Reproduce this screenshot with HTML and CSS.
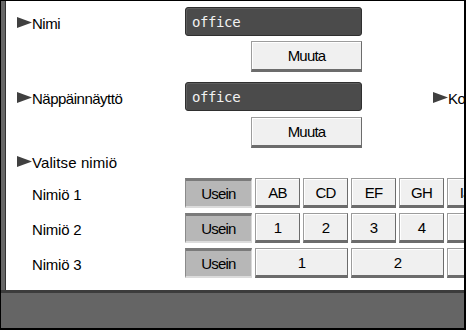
FILE: index.html
```html
<!DOCTYPE html>
<html>
<head>
<meta charset="utf-8">
<link rel="stylesheet" href="styles.css">
</head>
<body>
<div class="screen">
  <div class="main">
    <div class="panel">
      <div class="field first">
        <div class="label"><svg class="tri" width="15" height="11" viewBox="0 0 15 11"><path d="M0 0L15 5.5L0 11Z"/></svg>Nimi</div>
        <div class="tbox">office</div>
      </div>
      <div class="actions first-act"><button class="btn muuta">Muuta</button></div>
      <div class="field second">
        <div class="label"><svg class="tri" width="15" height="11" viewBox="0 0 15 11"><path d="M0 0L15 5.5L0 11Z"/></svg>Näppäinnäyttö</div>
        <div class="tbox">office</div>
        <div class="label ko"><svg class="tri" width="15" height="11" viewBox="0 0 15 11"><path d="M0 0L15 5.5L0 11Z"/></svg>Koko</div>
      </div>
      <div class="actions second-act"><button class="btn muuta">Muuta</button></div>
      <div class="label section"><svg class="tri" width="15" height="11" viewBox="0 0 15 11"><path d="M0 0L15 5.5L0 11Z"/></svg>Valitse nimiö</div>
      <div class="rows">
        <div class="row">
          <span class="rlabel">Nimiö 1</span>
          <button class="btn sel">Usein</button>
          <button class="btn key">AB</button>
          <button class="btn key">CD</button>
          <button class="btn key">EF</button>
          <button class="btn key">GH</button>
          <button class="btn key">IJK</button>
        </div>
        <div class="row">
          <span class="rlabel">Nimiö 2</span>
          <button class="btn sel">Usein</button>
          <button class="btn key">1</button>
          <button class="btn key">2</button>
          <button class="btn key">3</button>
          <button class="btn key">4</button>
          <button class="btn key">5</button>
        </div>
        <div class="row">
          <span class="rlabel">Nimiö 3</span>
          <button class="btn sel">Usein</button>
          <button class="btn wide">1</button>
          <button class="btn wide">2</button>
          <button class="btn wide">3</button>
        </div>
      </div>
    </div>
  </div>
  <div class="footer"></div>
</div>
</body>
</html>
```

FILE: styles.css
```css
html, body {
  margin: 0;
  padding: 0;
  background: #000;
}
.screen {
  width: 466px;
  height: 330px;
  box-sizing: border-box;
  background: #000;
  padding: 1px 2px 2px 1px;
  display: flex;
  flex-direction: column;
  overflow: hidden;
  font-family: "Liberation Sans", Arial, sans-serif;
}
.main {
  height: 289px;
  display: flex;
  background: #666;
  padding-left: 4px;
}
.panel {
  flex: 1;
  background: #fff;
  border-left: 1px solid #333;
  overflow: hidden;
  padding-left: 11px;
  min-width: 0;
}
.field {
  display: flex;
  align-items: center;
  height: 29px;
}
.field.first { margin-top: 6px; }
.field.second { margin-top: 10px; }
.label {
  display: flex;
  align-items: center;
  width: 168px;
  flex: none;
  font-size: 15px;
  letter-spacing: -0.5px;
  color: #000;
  padding-top: 3px;
  white-space: nowrap;
}
.tri {
  fill: #404040;
  flex: none;
  margin-top: -1px;
}
.tbox {
  box-sizing: border-box;
  width: 177px;
  height: 29px;
  flex: none;
  background: #4b4b4b;
  border: 1px solid #2f2f2f;
  border-radius: 3px;
  box-shadow: inset 1px 1px 0 #5e5e5e;
  color: #f2f2f2;
  font-family: "DejaVu Sans Mono", "Liberation Mono", monospace;
  font-size: 14px;
  letter-spacing: -0.4px;
  display: flex;
  align-items: center;
  padding-left: 6px;
  padding-top: 1px;
}
.ko {
  margin-left: 71px;
  width: auto;
}
.actions {
  padding-left: 234px;
}
.first-act { margin-top: 5px; }
.second-act { margin-top: 6px; }
.btn {
  box-sizing: border-box;
  height: 31px;
  padding: 0;
  margin: 0;
  background: #f0f0f0;
  border: 1px solid #9c9c9c;
  border-right-color: #6c6c6c;
  border-bottom: 3px solid #6c6c6c;
  box-shadow: inset 1px 1px 0 #fff;
  font-family: "Liberation Sans", Arial, sans-serif;
  font-size: 15px;
  letter-spacing: -0.8px;
  color: #000;
  flex: none;
}
.muuta {
  width: 111px;
}
.section {
  margin-top: 4px;
  height: 20px;
  padding-top: 0;
  letter-spacing: 0.1px;
}
.rows {
  margin-top: 6px;
  display: flex;
  flex-direction: column;
  gap: 5px;
}
.row {
  display: flex;
  align-items: center;
  gap: 3px;
  height: 30px;
}
.row .btn { height: 30px; }
.rlabel {
  width: 153px;
  padding-left: 15px;
  flex: none;
  font-size: 15px;
  letter-spacing: -0.2px;
  padding-top: 2px;
  margin-right: -3px;
}
.sel {
  width: 67px;
  background: #b7b7b7;
  border: 1px solid #8a8a8a;
  border-top: 3px solid #7a7a7a;
  border-right-color: #d8d8d8;
  border-bottom: 2px solid #dcdcdc;
  box-shadow: none;
}
.key {
  width: 45px;
}
.wide {
  width: 93px;
}
.footer {
  flex: 1;
  background: #656565;
  border-top: 3px solid #3c3c3c;
}
```
